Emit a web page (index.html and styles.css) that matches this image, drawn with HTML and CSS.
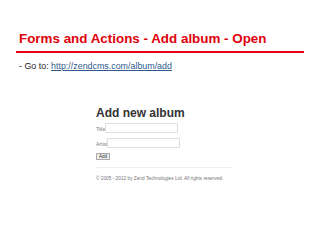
FILE: index.html
```html
<!DOCTYPE html>
<html lang="en">
<head>
    <meta charset="UTF-8">
    <title>Forms and Actions - Add album - Open</title>
    <link rel="stylesheet" href="styles.css">
</head>
<body>

    <div class="slide">
        <h1 class="slide-title">Forms and Actions - Add album - Open</h1>
        <p class="goto">- Go to: <a href="#">http://zendcms.com/album/add</a></p>

        <!-- screenshot of the album form -->
        <div class="shot">
            <h2>Add new album</h2>
            <div class="row">
                <label>Title</label>
                <span class="field"></span>
            </div>
            <div class="row">
                <label>Artist</label>
                <span class="field"></span>
            </div>
            <div class="btn-row"><span class="btn">Add</span></div>
            <div class="rule"></div>
            <p class="footer">&copy; 2005 - 2012 by Zend Technologies Ltd. All rights reserved.</p>
        </div>
    </div>

</body>
</html>
```

FILE: styles.css
```css
body {
    margin: 0;
    background-color: #fff;
    font-family: "Liberation Sans", Arial, sans-serif;
}
.slide {
    width: 320px;
    height: 240px;
    padding: 31px 16px 0 16px;
    box-sizing: border-box;
}
.slide-title {
    margin: 0;
    padding: 0 0 5px 3px;
    font-size: 13.4px;
    line-height: 15px;
    font-weight: bold;
    color: #e0000b;
    border-bottom: 2px solid #e5000f;
    white-space: nowrap;
}
.goto {
    margin: 8px 0 0 3px;
    font-size: 8.9px;
    line-height: 10px;
    color: #222;
}
.goto a {
    color: #2e5c8e;
}
.shot {
    margin: 35px 0 0 80px;
    color: #333;
}
.shot h2 {
    margin: 0 0 3px 0;
    font-size: 12px;
    line-height: 14px;
    font-weight: bold;
}
.row {
    display: flex;
    align-items: flex-end;
    height: 10px;
    margin-bottom: 5px;
}
.row label {
    font-size: 5px;
    line-height: 5px;
    margin-bottom: 1px;
    color: #777;
}
.field {
    display: block;
    width: 71px;
    height: 8px;
    border: 1px solid #ddd;
    border-radius: 1px;
}
.btn-row {
    display: flex;
    margin-top: 5px;
}
.btn {
    display: block;
    font-size: 4.5px;
    line-height: 5px;
    padding: 0 2px;
    border: 1px solid #aaa;
    background-color: #eee;
    color: #333;
}
.rule {
    width: 136px;
    border-top: 1px solid #eee;
    margin-top: 7px;
}
.footer {
    margin: 8px 0 0 0;
    font-size: 4.75px;
    line-height: 5px;
    color: #777;
    white-space: nowrap;
}
```
